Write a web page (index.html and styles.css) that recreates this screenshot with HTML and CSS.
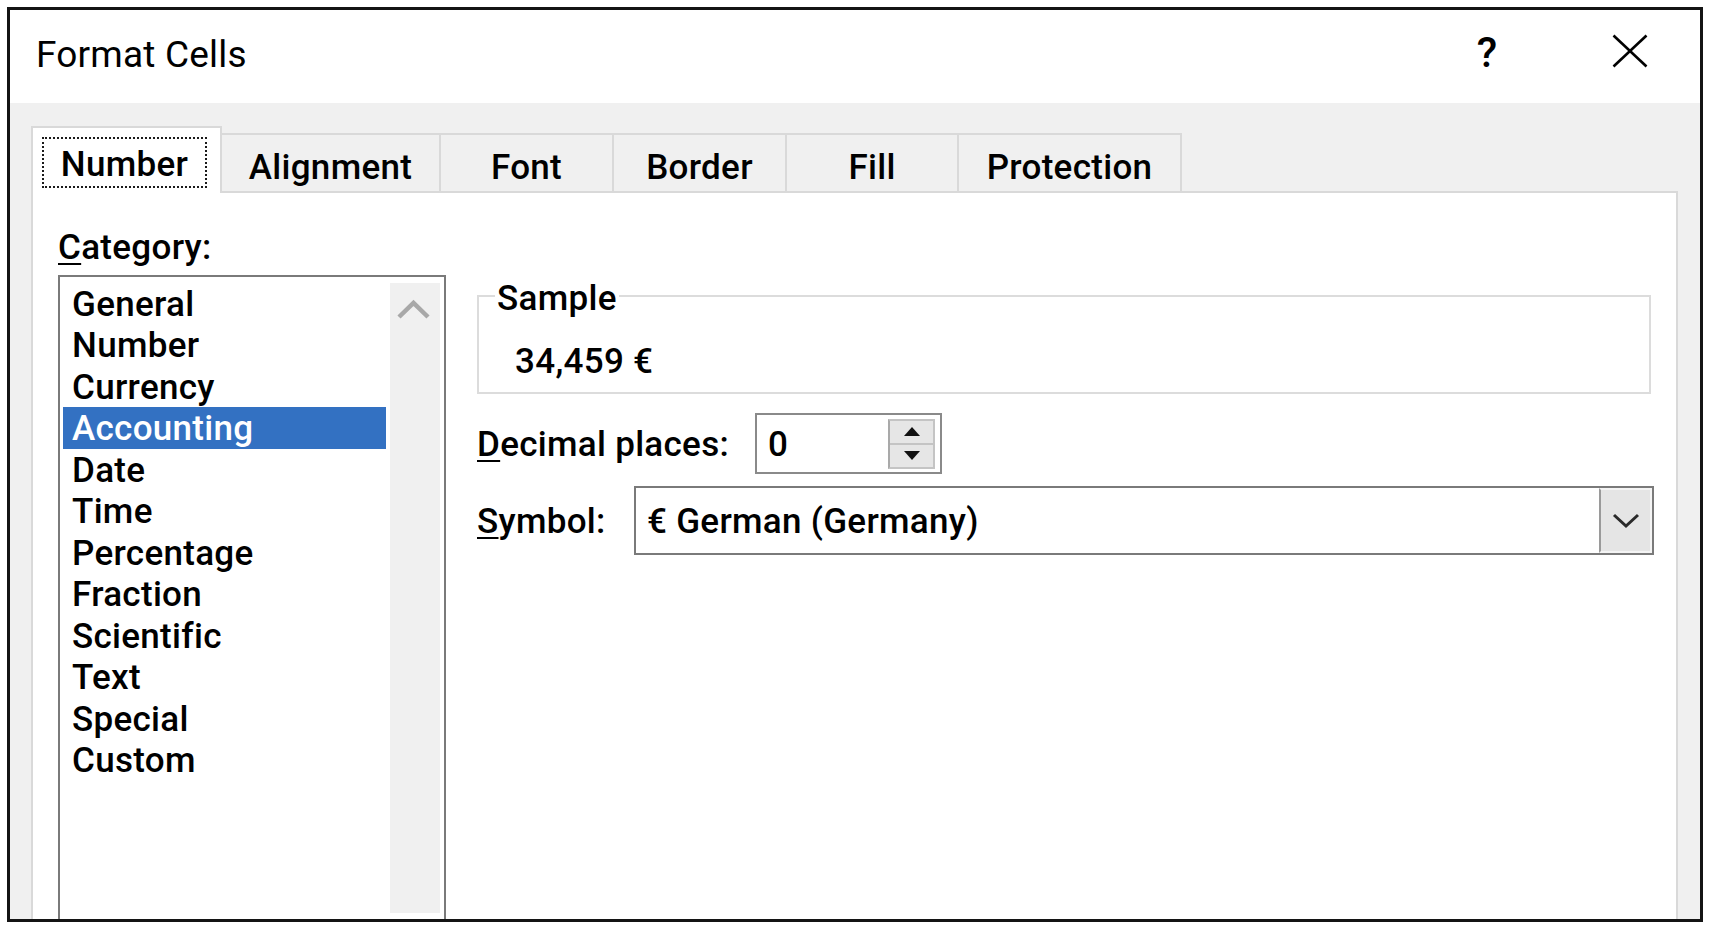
FILE: index.html
```html
<!DOCTYPE html>
<html lang="en">
<head>
<meta charset="utf-8">
<title>Format Cells</title>
<link rel="stylesheet" href="styles.css">
</head>
<body>
<div class="dialog">
  <div class="titlebar">
    <div class="title">Format Cells</div>
    <div class="help">?</div>
    <svg class="close" viewBox="0 0 36 34" width="36" height="34">
      <line x1="1.5" y1="1.5" x2="34.5" y2="32.5"/>
      <line x1="34.5" y1="1.5" x2="1.5" y2="32.5"/>
    </svg>
  </div>
  <div class="body">
    <div class="tabs">
      <div class="tab active"><span class="focus">Number</span></div>
      <div class="tab w-align">Alignment</div>
      <div class="tab w-font">Font</div>
      <div class="tab w-border">Border</div>
      <div class="tab w-fill">Fill</div>
      <div class="tab w-prot">Protection</div>
    </div>
    <div class="panel">
      <div class="col-left">
        <div class="label cat-label"><u>C</u>ategory:</div>
        <div class="listbox">
          <div class="items">
            <div class="item">General</div>
            <div class="item">Number</div>
            <div class="item">Currency</div>
            <div class="item selected">Accounting</div>
            <div class="item">Date</div>
            <div class="item">Time</div>
            <div class="item">Percentage</div>
            <div class="item">Fraction</div>
            <div class="item">Scientific</div>
            <div class="item">Text</div>
            <div class="item">Special</div>
            <div class="item">Custom</div>
          </div>
          <div class="scrollbar">
            <svg class="scroll-up" viewBox="0 0 50 50" width="50" height="50">
              <polyline points="9,34 23.5,20 38,34"/>
            </svg>
          </div>
        </div>
      </div>
      <div class="col-right">
        <fieldset class="sample">
          <legend>Sample</legend>
          <div class="sample-value">34,459 €</div>
        </fieldset>
        <div class="row decimal">
          <div class="label decimal-label"><u>D</u>ecimal places:</div>
          <div class="spin-input">
            <span class="spin-value">0</span>
            <div class="spinner">
              <div class="spin-btn"><svg viewBox="0 0 16 9" width="16" height="9"><polygon points="0,9 8,0 16,9"/></svg></div>
              <div class="spin-btn"><svg viewBox="0 0 16 9" width="16" height="9"><polygon points="0,0 16,0 8,9"/></svg></div>
            </div>
          </div>
        </div>
        <div class="row symbol">
          <div class="label symbol-label"><u>S</u>ymbol:</div>
          <div class="select">
            <span class="select-value">€ German (Germany)</span>
            <div class="select-btn">
              <svg viewBox="0 0 28 16" width="28" height="16"><polyline points="2,2 14,13 26,2"/></svg>
            </div>
          </div>
        </div>
      </div>
    </div>
  </div>
</div>
</body>
</html>
```
FILE: styles.css
```css
* { box-sizing: border-box; }
html, body { margin: 0; padding: 0; background: #fff; }
body {
  font-family: Roboto, "Open Sans", "DejaVu Sans", sans-serif;
  color: #000;
  font-weight: 500;
  letter-spacing: 0.3px;
}
.dialog {
  margin: 7px 0 0 7px;
  width: 1696px;
  height: 915px;
  border: 3px solid #141414;
  display: flex;
  flex-direction: column;
  overflow: hidden;
  background: #f0f0f0;
}
.titlebar {
  height: 93px;
  flex: none;
  background: #fff;
  display: flex;
  align-items: flex-start;
  padding-left: 26px;
}
.title {
  flex: 1;
  font-size: 37px;
  line-height: 42px;
  font-weight: 400;
  letter-spacing: 0.2px;
  margin-top: 24.4px;
}
.help {
  width: 30px;
  text-align: center;
  font-size: 42px;
  line-height: 42px;
  margin-top: 21.6px;
}
.close {
  margin: 24px 52px 0 110px;
  stroke: #000;
  stroke-width: 2.6;
  fill: none;
}
.body {
  flex: 1;
  min-height: 0;
  display: flex;
  flex-direction: column;
  padding: 23px 22px 0 21px;
}
.tabs {
  flex: none;
  height: 65px;
  display: flex;
  align-items: flex-end;
}
.tab {
  height: 58px;
  border: 2px solid #d9d9d9;
  border-bottom: none;
  margin-right: -2px;
  background: #f0f0f0;
  font-size: 35px;
  line-height: 41.5px;
  padding-top: 12.2px;
  text-align: center;
}
.tab.active {
  width: 191px;
  height: 67px;
  margin-bottom: -2px;
  background: #fff;
  position: relative;
  z-index: 1;
  padding: 9px 0 0 9px;
}
.focus {
  display: block;
  width: 165px;
  height: 51px;
  border: 2px dotted #1a1a1a;
  padding-top: 4px;
  line-height: 43px;
  text-align: center;
}
.w-align { width: 221px; }
.w-font { width: 175px; }
.w-border { width: 175px; }
.w-fill { width: 174px; }
.w-prot { width: 225px; }
.panel {
  flex: 1;
  min-height: 0;
  background: #fff;
  border: 2px solid #d9d9d9;
  border-bottom: none;
  display: flex;
  align-items: flex-start;
  padding: 31px 22px 0 25px;
}
.col-left {
  width: 388px;
  flex: none;
  display: flex;
  flex-direction: column;
}
.label {
  font-size: 35px;
  line-height: 41.5px;
}
.label u {
  text-decoration-thickness: 2px;
  text-underline-offset: 4px;
}
.cat-label {
  padding-top: 2.5px;
}
.listbox {
  margin-top: 7px;
  height: 700px;
  border: 2px solid #7a7a7a;
  display: flex;
  align-items: flex-start;
}
.items {
  width: 330px;
  padding: 5.5px 4px 0 3px;
}
.item {
  font-size: 35px;
  height: 41.5px;
  padding: 2px 0 0 9px;
  line-height: 39.5px;
  white-space: nowrap;
}
.item.selected {
  background: #3371c2;
  color: #fff;
}
.scrollbar {
  width: 50px;
  height: 630px;
  margin-top: 6px;
  background: #f0f0f0;
}
.scroll-up {
  display: block;
  stroke: #a8a8a8;
  stroke-width: 4.5;
  fill: none;
}
.col-right {
  flex: 1;
  margin-left: 31px;
  display: flex;
  flex-direction: column;
}
.sample {
  margin: 48.75px 3px 0 0;
  border: 2px solid #dcdcdc;
  padding: 22px 0 9.25px 16px;
  min-width: 0;
}
.sample legend {
  padding: 5px 2px 0;
  margin: 0;
  font-size: 35px;
  line-height: 41.5px;
}
.sample-value {
  padding-left: 20px;
  font-size: 35px;
  line-height: 41.5px;
}
.row {
  display: flex;
  align-items: center;
}
.row.decimal {
  margin-top: 19px;
  height: 61px;
}
.decimal-label {
  width: 278px;
  padding-top: 3px;
}
.spin-input {
  width: 187px;
  height: 61px;
  border: 2px solid #8a8a8a;
  background: #fff;
  display: flex;
  align-items: center;
  padding: 0 5px 0 11px;
}
.spin-value {
  flex: 1;
  font-size: 35px;
  line-height: 41.5px;
  padding-top: 3px;
}
.spinner {
  width: 47px;
  height: 50px;
  display: flex;
  flex-direction: column;
  border: 2px solid #c4c4c4;
  border-left-color: #a9a9a9;
  background: #e6e6e6;
}
.spin-btn {
  flex: 1;
  display: flex;
  align-items: center;
  justify-content: center;
}
.spin-btn + .spin-btn {
  border-top: 2px solid #c4c4c4;
}
.spin-btn svg { display: block; fill: #111; }
.row.symbol {
  margin-top: 12px;
  height: 69px;
}
.symbol-label {
  width: 157px;
  padding-top: 3px;
}
.select {
  width: 1020px;
  height: 69px;
  border: 2px solid #7a7a7a;
  background: #fff;
  display: flex;
  align-items: center;
  padding-left: 11px;
}
.select-value {
  flex: 1;
  font-size: 35px;
  line-height: 41.5px;
  padding-top: 3px;
  white-space: nowrap;
}
.select-btn {
  width: 53px;
  align-self: stretch;
  background: #e5e5e5;
  border: 2px solid #f4f4f4;
  border-left: 2px solid #9a9a9a;
  display: flex;
  align-items: center;
  justify-content: center;
}
.select-btn svg {
  display: block;
  stroke: #2a2a2a;
  stroke-width: 3;
  fill: none;
}
```
